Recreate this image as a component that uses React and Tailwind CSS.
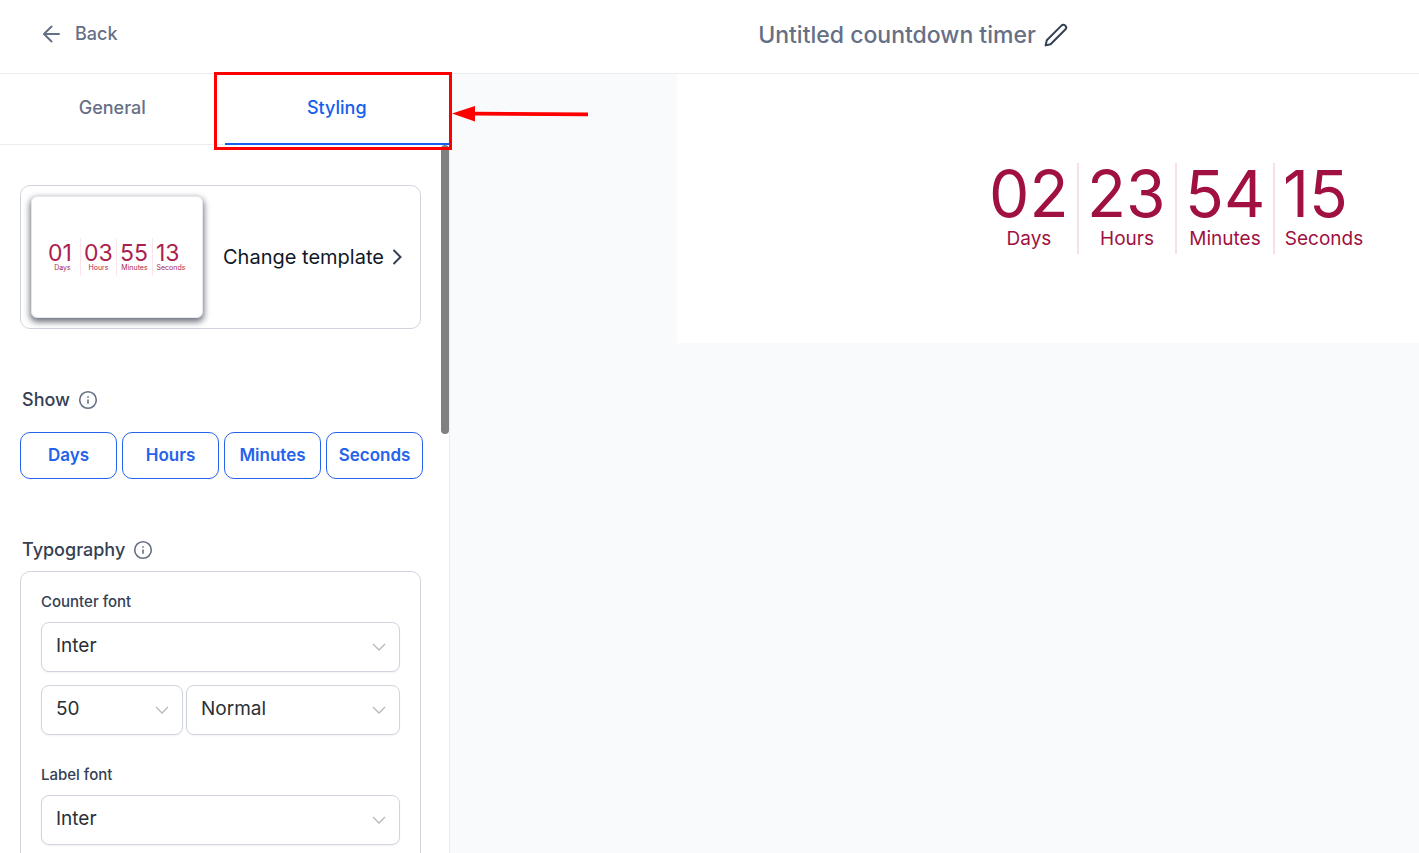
import { useState } from 'react'

const UNITS = ['Days', 'Hours', 'Minutes', 'Seconds']
const FONTS = ['Inter', 'Roboto', 'Lato', 'Open Sans']
const SIZES = ['30', '40', '50', '60']
const WEIGHTS = ['Normal', 'Medium', 'Bold']

function ArrowLeftIcon() {
  return (
    <svg viewBox="0 0 18 18" className="size-[18px]" fill="none" stroke="currentColor" strokeWidth="2" strokeLinecap="round" strokeLinejoin="round" aria-hidden="true">
      <path d="M16 9H1.5M8.5 1.5 1 9l7.5 7.5" />
    </svg>
  )
}

function PencilIcon() {
  return (
    <svg viewBox="0 0 24 24" className="size-6" fill="none" stroke="currentColor" strokeWidth="2" strokeLinejoin="round" aria-hidden="true">
      <path d="M17.4 2.6a2.75 2.75 0 0 1 3.9 3.9L6.6 21.2 1.6 22.4 2.8 17.2Z" />
    </svg>
  )
}

function InfoIcon() {
  return (
    <svg viewBox="0 0 20 20" className="size-5" fill="none" stroke="currentColor" strokeWidth="1.6" aria-hidden="true">
      <circle cx="10" cy="10" r="8.3" />
      <path d="M10 9.4v4.4M10 6.2v1.6" />
    </svg>
  )
}

function Chevron() {
  return (
    <svg viewBox="0 0 14 8" className="pointer-events-none absolute top-5 right-3.5 mt-px h-2 w-3.5" fill="none" stroke="#b8b8b8" strokeWidth="1.3" aria-hidden="true">
      <path d="m1 1 6 6 6-6" />
    </svg>
  )
}

function SelectField({ id, label, options, initial, className = '' }) {
  const [value, setValue] = useState(initial)
  return (
    <div className={`relative ${className}`}>
      <select
        id={id}
        aria-label={label}
        value={value}
        onChange={e => setValue(e.target.value)}
        className="block h-[50px] w-full appearance-none rounded-lg border border-[#d0d5dd] bg-white pr-8 pb-px pl-3.5 text-[19px] text-[#2b2f36] shadow-xs"
      >
        {options.map(o => <option key={o}>{o}</option>)}
      </select>
      <Chevron />
    </div>
  )
}

function SectionTitle({ children }) {
  return (
    <h2 className="flex items-center gap-2 px-0.5 text-[18px] leading-6 font-medium text-[#344054]">
      {children}
      <button type="button" aria-label={`About ${children}`} className="text-[#667085]"><InfoIcon /></button>
    </h2>
  )
}

function FontGroup({ id, label }) {
  return (
    <div>
      <label htmlFor={id} className="block pb-2.5 text-[15px] leading-5 font-medium text-[#344054]">{label}</label>
      <SelectField id={id} options={FONTS} initial="Inter" />
      <div className="mt-[13px] flex gap-[3px]">
        <SelectField label={`${label} size`} options={SIZES} initial="50" className="w-[142px]" />
        <SelectField label={`${label} weight`} options={WEIGHTS} initial="Normal" className="flex-1" />
      </div>
    </div>
  )
}

// small version of the timer shown on the template card
function TemplateThumb() {
  const values = ['01', '03', '55', '13']
  return (
    <div className="flex h-[122px] w-[172px] items-center justify-center rounded-md border border-[#e4e7ec] bg-white text-[#ab1f4e] shadow-[0_3px_6px_1px_rgba(16,24,40,0.6)]">
      {UNITS.map((unit, i) => (
        <div key={unit} className="flex h-[38px] w-9 flex-col border-r border-[#fbe4ec] pt-1 last:border-r-0">
          <span className="pl-[3px] text-left text-[23px] leading-[22px]">{values[i]}</span>
          <span className="text-center text-[7px] leading-2">{unit}</span>
        </div>
      ))}
    </div>
  )
}

function Timer() {
  const values = ['02', '23', '54', '15']
  return (
    <div className="flex text-[#a01040]">
      {UNITS.map((unit, i) => (
        <div key={unit} className="flex h-[91px] w-[98px] flex-col border-r-2 border-[#f9dfe7] last:border-r-0">
          <span className="pl-2 text-[64px] leading-[62px]">{values[i]}</span>
          <span className="text-center text-[19px] leading-7">{unit}</span>
        </div>
      ))}
    </div>
  )
}

function Highlight() {
  return (
    <>
      <div className="pointer-events-none absolute -top-0.5 -right-[3px] h-[78px] w-[238px] border-3 border-[#ff0000]" />
      <svg viewBox="0 0 136 16" className="pointer-events-none absolute top-8 left-full ml-[3px] h-4 w-[136px]" fill="#ff0000" aria-hidden="true">
        <path d="M0 7.5 23 0v5.7L136 6.6v3.6L23 9.6V15.5Z" />
      </svg>
    </>
  )
}

function App() {
  const [tab, setTab] = useState('Styling')
  const [shown, setShown] = useState(UNITS)

  function toggleUnit(unit) {
    setShown(prev => prev.includes(unit) ? prev.filter(u => u !== unit) : [...prev, unit])
  }

  return (
    <div className="flex h-screen flex-col overflow-hidden bg-white font-['Inter',sans-serif]">
      <header className="flex h-[74px] shrink-0 items-center border-b border-[#eaecf0] pb-1 text-[#667085]">
        <div className="w-[407px] pl-[43px]">
          <a href="#" className="inline-flex items-center gap-3.5 text-[18px] leading-7 font-medium">
            <ArrowLeftIcon />
            Back
          </a>
        </div>
        <div className="flex flex-1 items-center justify-center gap-2">
          <h1 className="text-[23px] leading-8 font-medium">Untitled countdown timer</h1>
          <button type="button" aria-label="Rename timer" className="text-[#344054]"><PencilIcon /></button>
        </div>
      </header>

      <div className="flex min-h-0 flex-1">
        <aside className="relative flex w-[450px] shrink-0 flex-col border-r border-[#eaecf0]">
          <div role="tablist" className="flex h-[71px] shrink-0 border-b border-[#eaecf0]">
            {['General', 'Styling'].map(name => (
              <button
                key={name}
                type="button"
                role="tab"
                aria-selected={tab === name}
                onClick={() => setTab(name)}
                className={`-mb-px flex-1 border-b-2 pb-0.5 text-[18px] font-medium ${
                  tab === name ? 'border-[#155eef] text-[#155eef]' : 'border-transparent text-[#667085]'
                }`}
              >
                {name}
              </button>
            ))}
          </div>

          <div className="relative min-h-0 flex-1 overflow-hidden pt-10 pr-7 pl-5">
            <button type="button" className="flex h-36 w-full items-center gap-5 rounded-[10px] border border-[#d0d5dd] pl-2.5 text-[20px] text-[#101828]">
              <TemplateThumb />
              <span className="flex items-center gap-2">
                Change template
                <svg viewBox="0 0 10 16" className="h-4 w-2.5" fill="none" stroke="#344054" strokeWidth="2" aria-hidden="true">
                  <path d="m1.5 1 7 7-7 7" />
                </svg>
              </span>
            </button>

            <div className="mt-[59px]">
              <SectionTitle>Show</SectionTitle>
              <div className="mt-5 -mr-0.5 grid grid-cols-4 gap-[5px]">
                {UNITS.map(unit => (
                  <button
                    key={unit}
                    type="button"
                    aria-pressed={shown.includes(unit)}
                    onClick={() => toggleUnit(unit)}
                    className={`h-[47px] rounded-[10px] border text-[17px] font-semibold ${
                      shown.includes(unit) ? 'border-[#2563eb] text-[#2563eb]' : 'border-[#d0d5dd] text-[#667085]'
                    }`}
                  >
                    {unit}
                  </button>
                ))}
              </div>
            </div>

            <div className="mt-[59px]">
              <SectionTitle>Typography</SectionTitle>
              <div className="mt-[9px] flex flex-col gap-[30px] rounded-[10px] border border-[#d0d5dd] px-5 py-5">
                <FontGroup id="counter-font" label="Counter font" />
                <FontGroup id="label-font" label="Label font" />
              </div>
            </div>

            {/* scroll thumb */}
            <div className="absolute top-0 right-0 h-[289px] w-2 rounded-full bg-[#808080]" />
          </div>

          <Highlight />
        </aside>

        <main className="min-w-0 flex-1 overflow-hidden bg-[#f9fafc] pl-[227px]">
          <div className="flex h-[269px] w-[1000px] items-center justify-center bg-white">
            <Timer />
          </div>
        </main>
      </div>
    </div>
  )
}

export default App
